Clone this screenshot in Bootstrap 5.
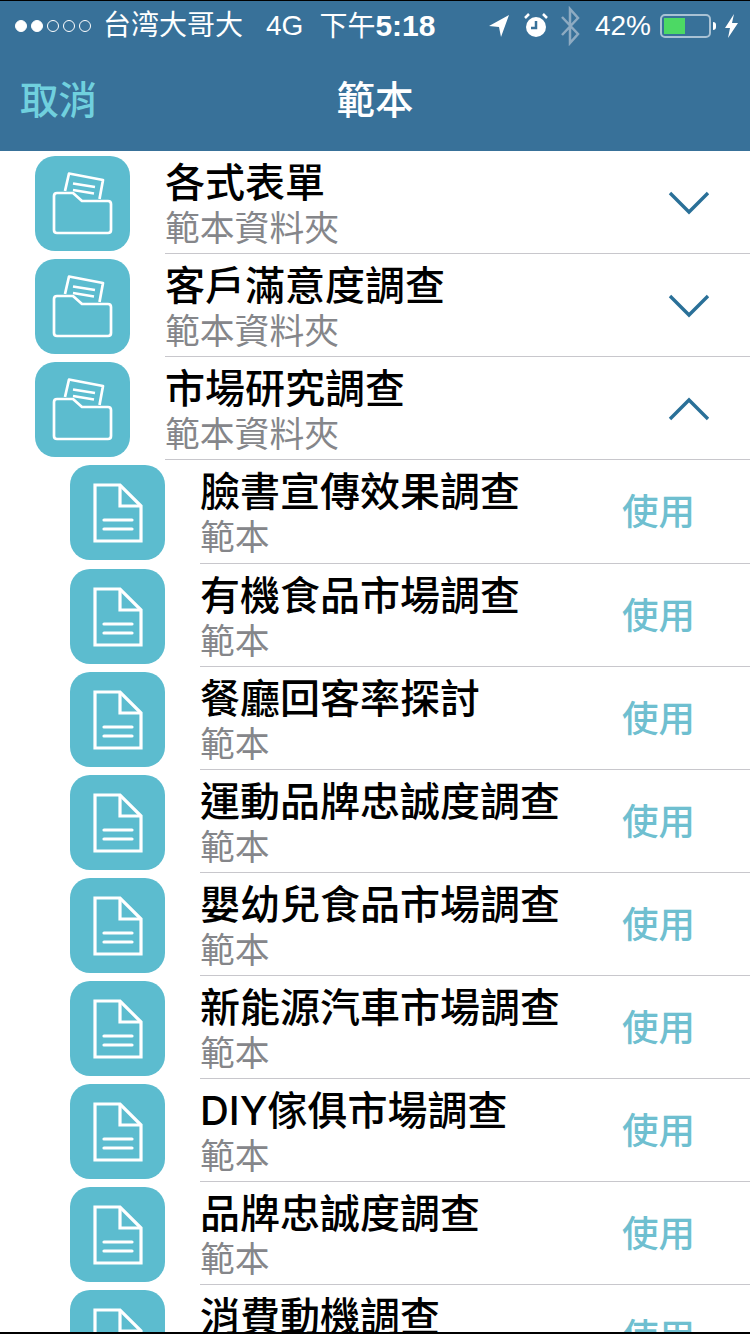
<!DOCTYPE html>
<html lang="zh-Hant">
<head>
  <meta charset="UTF-8">
  <title>範本</title>
  <link href="https://cdn.jsdelivr.net/npm/bootstrap@5.3.2/dist/css/bootstrap.min.css" rel="stylesheet">
  <style>
    html, body { height: 1334px; overflow: hidden; }
    body { background: #fff; font-family: "Liberation Sans", "Noto Sans CJK TC", sans-serif; border-top: 1px solid #000; border-bottom: 2px solid #000; }
    .app-screen { height: 1331px; overflow: hidden; }
    .app-head { background: #387199; color: #fff; height: 150.2px; }
    .status-row { height: 50px; padding: 0 12px 0 15px; font-size: 28px; line-height: 50px; white-space: nowrap; }
    .status-row b { font-size: 30px; font-weight: 700; }
    .sig-dot { width: 12px; height: 12px; border-radius: 50%; border: 1.5px solid #fff; margin-right: 4px; }
    .sig-dot.on { background: #fff; }
    .st-4g { margin-left: 23px; }
    .st-time { margin-left: 16px; }
    .st-alarm { margin-left: 13px; }
    .st-bt { margin-left: 10px; }
    .st-pct { margin-left: 14px; }
    .st-bolt { margin-left: 9px; }
    .batt-box { width: 51px; height: 24px; border: 2px solid #a9c2d4; border-radius: 5px; padding: 2px; margin-left: 9px; }
    .batt-box span { display: block; width: 21px; height: 100%; background: #4cd964; }
    .batt-tip { width: 3px; height: 8px; background: #fff; border-radius: 0 3px 3px 0; margin-left: 2px; }
    .title-row { display: grid; grid-template-columns: 1fr auto 1fr; height: 100px; padding: 0 20px; font-size: 38.5px; font-weight: 500; line-height: 100px; }
    .btn-cancel { color: #70d0de; }
    .tpl-row { height: 103.09px; padding-left: 35px; background: #fff; }
    .tpl-row.child { padding-left: 70px; }
    .tpl-icon { flex: 0 0 95px; width: 95px; height: 95px; margin-top: 5px; background: #5cbccf; border-radius: 20px; }
    .tpl-body { flex: 1; margin-left: 35px; height: 103.09px; border-bottom: 1.5px solid #c8c7cc; min-width: 0; }
    .tpl-title { font-family: Inter, "Noto Sans CJK TC", sans-serif; font-size: 40px; font-weight: 500; line-height: 48px; color: #000; margin-top: 8px; white-space: nowrap; }
    .tpl-sub { font-size: 34.8px; line-height: 40px; color: #85868a; margin-top: 2px; white-space: nowrap; }
    .tpl-use { font-size: 36.5px; font-weight: 500; color: #6fbfd0; line-height: 105px; margin-right: 55px; }
    .tpl-chev { margin: 2px 40px 0 0; width: 42px; align-self: center; }
  </style>
</head>
<body>
<div class="app-screen">
  <div class="app-head">
    <div class="status-row d-flex align-items-center">
      <i class="sig-dot on"></i><i class="sig-dot on"></i><i class="sig-dot"></i><i class="sig-dot"></i><i class="sig-dot"></i>
      <span class="ms-2">台湾大哥大</span>
      <span class="st-4g">4G</span>
      <span class="st-time">下午<b>5:18</b></span>
      <svg class="ms-auto" width="22" height="24" viewBox="0 0 22 24"><path d="M21 1 1 12l10 1 2 10z" fill="#fff"/></svg>
      <svg class="st-alarm" width="26" height="28" viewBox="0 0 26 28"><circle cx="13" cy="15" r="10" fill="#fff"/><path d="M13 9v7H8" stroke="#387199" stroke-width="2.5" fill="none"/><path d="M2 6 6 2M24 6l-4-4" stroke="#fff" stroke-width="2.5"/></svg>
      <svg class="st-bt" width="22" height="40" viewBox="0 0 22 40"><path d="M3 11 19 28 11 37V3l8 9L3 29" stroke="#8eabc2" stroke-width="2.5" fill="none"/></svg>
      <span class="st-pct">42%</span>
      <div class="batt-box"><span></span></div>
      <i class="batt-tip"></i>
      <svg class="st-bolt" width="13" height="24" viewBox="0 0 13 24"><path d="M9 0 0 14h5l-2 10 10-15H7z" fill="#fff"/></svg>
    </div>
    <div class="title-row">
      <div class="btn-cancel">取消</div>
      <div>範本</div>
      <div></div>
    </div>
  </div>
  <div id="tplList"></div>
</div>

<script>
  const folderIcon = `<svg viewBox="0 0 95 95" fill="none" stroke="#fff" stroke-width="2.7" stroke-linejoin="round">
      <path d="M30 35 34 17.5 68 24 64.5 43"/><path d="M38 27.5 60 31M38 34 59 37.5"/>
      <path d="M22 37H38L47 45H73Q76 45 76 48V74Q76 77 73 77H22Q19 77 19 74V40Q19 37 22 37Z" fill="#5cbccf"/></svg>`;
  const docIcon = `<svg viewBox="0 0 95 95" fill="none" stroke="#fff" stroke-width="3.2">
      <path d="M25 20H50L71 41V76H25Z"/><path d="M50 20V41H71"/>
      <path d="M34 55H62M34 64H62" stroke-linecap="round"/></svg>`;
  const chevDown = `<svg class="tpl-chev" height="24" viewBox="0 0 42 24"><path d="M2 2 21 21 40 2" fill="none" stroke="#2a7098" stroke-width="3.4"/></svg>`;
  const chevUp = `<svg class="tpl-chev" height="24" viewBox="0 0 42 24"><path d="M2 22 21 3 40 22" fill="none" stroke="#2a7098" stroke-width="3.4"/></svg>`;

  const folders = [
    { nome: '各式表單', aberta: false },
    { nome: '客戶滿意度調查', aberta: false },
    { nome: '市場研究調查', aberta: true }
  ];
  const modelos = ['臉書宣傳效果調查', '有機食品市場調查', '餐廳回客率探討', '運動品牌忠誠度調查',
    '嬰幼兒食品市場調查', '新能源汽車市場調查', 'DIY傢俱市場調查', '品牌忠誠度調查', '消費動機調查'];

  const lista = document.getElementById('tplList');
  let html = '';
  folders.forEach(f => {
    html += `<div class="tpl-row d-flex">
        <div class="tpl-icon">${folderIcon}</div>
        <div class="tpl-body d-flex justify-content-between">
          <div><div class="tpl-title">${f.nome}</div><div class="tpl-sub">範本資料夾</div></div>
          ${f.aberta ? chevUp : chevDown}
        </div>
      </div>`;
  });
  modelos.forEach(nome => {
    html += `<div class="tpl-row child d-flex">
        <div class="tpl-icon">${docIcon}</div>
        <div class="tpl-body d-flex justify-content-between">
          <div><div class="tpl-title">${nome}</div><div class="tpl-sub">範本</div></div>
          <div class="tpl-use">使用</div>
        </div>
      </div>`;
  });
  lista.innerHTML = html;
</script>
<script src="https://cdn.jsdelivr.net/npm/bootstrap@5.3.2/dist/js/bootstrap.bundle.min.js"></script>
</body>
</html>
